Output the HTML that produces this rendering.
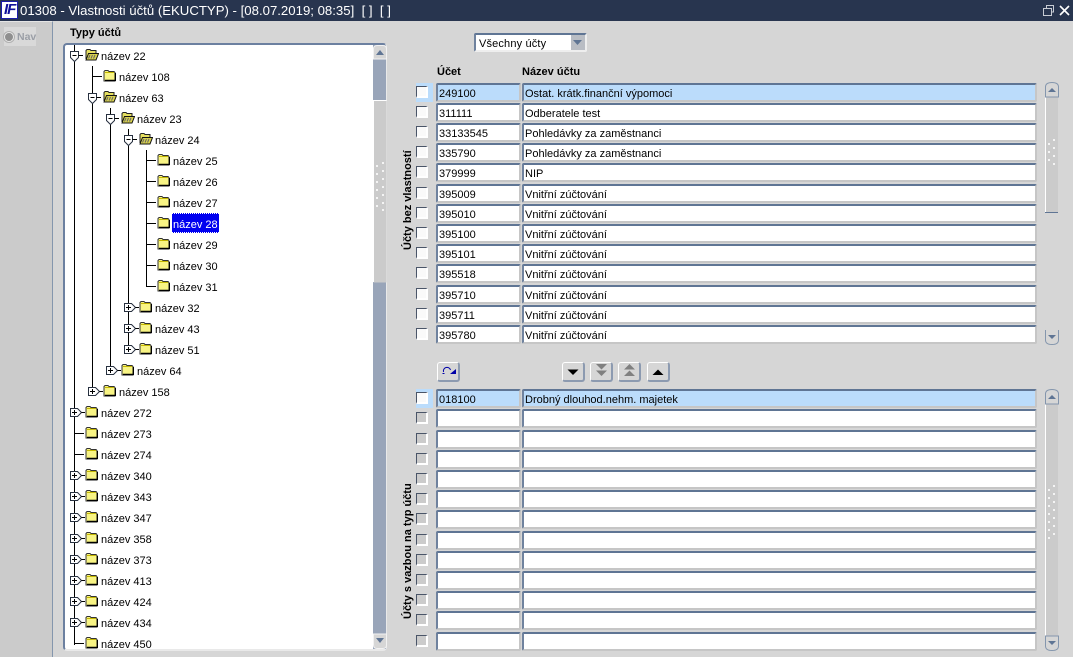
<!DOCTYPE html>
<html lang="cs">
<head>
<meta charset="utf-8">
<title>Vlastnosti účtů</title>
<style>
html,body{margin:0;padding:0;width:1073px;height:657px;overflow:hidden;background:#d6d6d6;font-family:"Liberation Sans",Arial,sans-serif;font-size:11px;color:#000}
div,span{position:absolute;box-sizing:border-box}
.i{height:19px;background:#fff;border-top:2px solid #5f7594;border-left:2px solid #6f829e;border-right:2px solid #c6c6c6;border-bottom:2px solid #c6c6c6;border-radius:2px;line-height:19px;white-space:nowrap;overflow:hidden}
.a{left:436px;width:85px;padding-left:1px}
.n{left:522px;width:515px;padding-left:1px}
.s{background:#bbdcfb}
.c{left:416px;width:12px;height:12px;background:#fafafa;border-top:1px solid #4a5568;border-left:1px solid #4a5568;border-right:2px solid #fff;border-bottom:2px solid #fff}
.d{background:#cbcbcb}
.h{left:416px;width:17px;height:19px;background:#bbdcfb}
.b{width:23px;height:20px;top:362px;background:#d6d6d6;border-top:1px solid #fff;border-left:1px solid #fff;border-right:2px solid #8c9ab0;border-bottom:2px solid #8c9ab0;border-radius:3px}
.l{font-weight:bold;white-space:nowrap}
svg{position:absolute;overflow:hidden}
</style>
</head>
<body>
<svg width="0" height="0" style="left:0;top:0">
<defs>
<symbol id="fc" viewBox="0 0 13 12" width="13" height="12">
<path d="M1 3V1.5L2 .5H5L6 1.5H11L12 2.5V11H1Z" fill="#f8f484" stroke="#333" stroke-width="1"/>
<path d="M2 10.5H12.5M12.5 3V11" stroke="#000" stroke-width="1.4" fill="none"/>
<path d="M2 2.5H11" stroke="#c4b700" stroke-width="1"/>
</symbol>
<symbol id="fo" viewBox="0 0 14 12" width="14" height="12">
<path d="M1 10V1.5L2 .5H5L6 1.5H11V4" fill="#e5df60" stroke="#222" stroke-width="1"/>
<path d="M1 11L3.5 4.5H13.5L11 11Z" fill="#d9d24e" stroke="#111" stroke-width="1"/>
<path d="M3.5 9.5L5 6M6 9.5L7.5 6M8.5 9.5L10 6" stroke="#666" stroke-width="1"/>
</symbol>
<symbol id="ho" viewBox="0 0 14 12" width="14" height="12">
<path d="M.5 .5H8.5V6.5L4.5 10.5L.5 6.5Z" fill="#fff" stroke="#27303f" stroke-width="1"/>
<path d="M2.5 4.5H6.5M8.5 4.5H13" stroke="#000" stroke-width="1"/>
</symbol>
<symbol id="hc" viewBox="0 0 16 10" width="16" height="10">
<path d="M.5 .5H7.5L11.5 4.5L7.5 8.5H.5Z" fill="#fff" stroke="#27303f" stroke-width="1"/>
<path d="M2 4.5H7M4.5 2V7M11.5 4.5H15" stroke="#000" stroke-width="1"/>
</symbol>
</defs>
</svg>

<!-- title bar -->
<div style="left:0;top:0;width:1073px;height:21px;background:#28354f"></div>
<div style="left:1px;top:1px;width:17px;height:18px;background:#fff;border:1px solid #1c1ca8"></div>
<span style="left:4px;top:1px;font:italic bold 15px/18px 'Liberation Sans',sans-serif;color:#10109a;letter-spacing:-1px">IF</span>
<span style="left:20px;top:2px;color:#fff;font-size:13.2px;line-height:17px;white-space:pre">01308 - Vlastnosti účtů (EKUCTYP) - [08.07.2019; 08:35]  [ ]  [ ]</span>
<svg style="left:1040px;top:3px" width="33" height="15" viewBox="0 0 33 15">
<path d="M3.5 5.5H11.5V12.5H3.5ZM6.5 5V2.5H13.5V9H12" fill="none" stroke="#c8ccd4" stroke-width="1"/>
<path d="M20 3L29 12M29 3L20 12" stroke="#fff" stroke-width="1.6"/>
</svg>

<!-- nav -->
<div style="left:0;top:21px;width:53px;height:636px;background:#cbcbcb;border-right:1px solid #8496ad;border-top:1px solid #e4e4e4"></div>
<div style="left:4px;top:27px;width:32px;height:19px;background:#d9d9d9"></div>
<div style="left:4px;top:32px;width:10px;height:10px;border-radius:50%;background:#8f8f8f;border:1px solid #e8e8e8;box-shadow:0 0 0 1px #b0b0b0"></div>
<span style="left:17px;top:30px;color:#9a9ea6;font-weight:bold;font-size:10.5px;line-height:14px">Nav</span>

<span class="l" style="left:70px;top:26px;line-height:14px">Typy účtů</span>

<!-- tree -->
<div style="left:63px;top:43px;width:324px;height:608px;background:#fff;border-top:2px solid #6c80a0;border-left:2px solid #6c80a0;border-right:2px solid #e9e9e9;border-bottom:2px solid #e9e9e9;border-radius:4px"></div>
<svg style="left:65px;top:45px" width="308" height="604" viewBox="65 45 308 604" font-family="'Liberation Sans',Arial,sans-serif" font-size="11">
<g stroke="#000" stroke-width="1" fill="none">
<path d="M74.5 45V645M92.5 66V392M110.5 108V371M128.5 129V350M146.5 150V287"/>
<path d="M93 76.500H102M147 160.500H156M147 181.500H156M147 202.500H156M147 223.500H156M147 244.500H156M147 265.500H156M147 286.500H156M75 433.500H84M75 454.500H84M75 643.500H84"/>
</g>
<use href="#ho" x="70" y="51"/><use href="#ho" x="88" y="93"/><use href="#ho" x="106" y="114"/><use href="#ho" x="124" y="135"/>
<use href="#hc" x="124" y="303"/><use href="#hc" x="124" y="324"/><use href="#hc" x="124" y="345"/><use href="#hc" x="106" y="366"/><use href="#hc" x="88" y="387"/>
<use href="#hc" x="70" y="408"/><use href="#hc" x="70" y="471"/><use href="#hc" x="70" y="492"/><use href="#hc" x="70" y="513"/><use href="#hc" x="70" y="534"/><use href="#hc" x="70" y="555"/><use href="#hc" x="70" y="576"/><use href="#hc" x="70" y="597"/><use href="#hc" x="70" y="618"/>
<use href="#fo" x="85" y="49"/><use href="#fc" x="103" y="70"/><use href="#fo" x="103" y="91"/><use href="#fo" x="121" y="112"/><use href="#fo" x="139" y="133"/>
<use href="#fc" x="157" y="154"/><use href="#fc" x="157" y="175"/><use href="#fc" x="157" y="196"/><use href="#fc" x="157" y="217"/><use href="#fc" x="157" y="238"/><use href="#fc" x="157" y="259"/><use href="#fc" x="157" y="280"/>
<use href="#fc" x="139" y="301"/><use href="#fc" x="139" y="322"/><use href="#fc" x="139" y="343"/><use href="#fc" x="121" y="364"/><use href="#fc" x="103" y="385"/>
<use href="#fc" x="85" y="406"/><use href="#fc" x="85" y="427"/><use href="#fc" x="85" y="448"/><use href="#fc" x="85" y="469"/><use href="#fc" x="85" y="490"/><use href="#fc" x="85" y="511"/><use href="#fc" x="85" y="532"/><use href="#fc" x="85" y="553"/><use href="#fc" x="85" y="574"/><use href="#fc" x="85" y="595"/><use href="#fc" x="85" y="616"/><use href="#fc" x="85" y="637"/>
<rect x="172" y="213" width="47" height="20" fill="#0000f0"/>
<path d="M172 213.500H219M172 232.500H219" stroke="#fff" stroke-width="1" stroke-dasharray="1 1"/>
<text x="101" y="60">název 22</text>
<text x="119" y="81">název 108</text>
<text x="119" y="102">název 63</text>
<text x="137" y="123">název 23</text>
<text x="155" y="144">název 24</text>
<text x="173" y="165">název 25</text>
<text x="173" y="186">název 26</text>
<text x="173" y="207">název 27</text>
<text x="173" y="228" fill="#fff">název 28</text>
<text x="173" y="249">název 29</text>
<text x="173" y="270">název 30</text>
<text x="173" y="291">název 31</text>
<text x="155" y="312">název 32</text>
<text x="155" y="333">název 43</text>
<text x="155" y="354">název 51</text>
<text x="137" y="375">název 64</text>
<text x="119" y="396">název 158</text>
<text x="101" y="417">název 272</text>
<text x="101" y="438">název 273</text>
<text x="101" y="459">název 274</text>
<text x="101" y="480">název 340</text>
<text x="101" y="501">název 343</text>
<text x="101" y="522">název 347</text>
<text x="101" y="543">název 358</text>
<text x="101" y="564">název 373</text>
<text x="101" y="585">název 413</text>
<text x="101" y="606">název 424</text>
<text x="101" y="627">název 434</text>
<text x="101" y="648">název 450</text>
</svg>

<!-- tree scrollbar -->
<svg style="left:372px;top:43px" width="16" height="608" viewBox="372 43 16 608">
<rect x="373" y="45" width="13" height="604" fill="#99a5b9"/>
<rect x="373.500" y="100.500" width="13" height="182" fill="#cbcbcb"/>
<path d="M373.500 282V100.500H386.500" stroke="#fff" fill="none"/>
<path d="M373.500 59V49Q373.500 45.500 377 45.500H383Q386.500 45.500 386.500 49V59Z" fill="#d6d6d6" stroke="#f2f2f2"/>
<path d="M376 55L380 50L384 55Z" fill="#5f7594"/>
<path d="M373.500 634V645Q373.500 648.500 377 648.500H383Q386.500 648.500 386.500 645V634Z" fill="#d6d6d6" stroke="#f2f2f2"/>
<path d="M376 638L380 643L384 638Z" fill="#5f7594"/>
<path d="M382 162h2v2h-2zM376 165h2v2h-2zM382 170h2v2h-2zM376 173h2v2h-2zM382 178h2v2h-2zM376 181h2v2h-2zM382 186h2v2h-2zM376 189h2v2h-2zM382 194h2v2h-2zM376 197h2v2h-2zM382 202h2v2h-2zM376 205h2v2h-2zM382 209h2v2h-2z" fill="#f4f4f4"/>
</svg>

<!-- combobox -->
<div style="left:474px;top:33px;width:113px;height:19px;background:#fff;border-top:2px solid #5f7594;border-left:2px solid #6f829e;border-right:2px solid #eee;border-bottom:2px solid #eee;border-radius:2px"></div>
<span style="left:479px;top:37px;line-height:15px;white-space:nowrap;letter-spacing:.15px">Všechny účty</span>
<div style="left:571px;top:35px;width:14px;height:15px;background:#b9bdc4"></div>
<svg style="left:573px;top:40px" width="10" height="6"><path d="M0 0H9L4.500 5Z" fill="#5f7594"/></svg>

<span class="l" style="left:437px;top:65px;line-height:14px">Účet</span>
<span class="l" style="left:522px;top:65px;line-height:14px">Název účtu</span>

<!-- vertical labels -->
<svg style="left:398px;top:140px" width="20" height="112" font-family="'Liberation Sans',Arial,sans-serif" font-size="11" font-weight="bold"><text transform="translate(13,110) rotate(-90)">Účty bez vlastností</text></svg>
<svg style="left:398px;top:470px" width="20" height="152" font-family="'Liberation Sans',Arial,sans-serif" font-size="11" font-weight="bold"><text transform="translate(13,149) rotate(-90)">Účty s vazbou na typ účtu</text></svg>

<!-- top rows -->
<div class="h" style="top:83px"></div>
<div class="c" style="top:86px"></div><div class="i a s" style="top:83px">249100</div><div class="i n s" style="top:83px">Ostat. krátk.finanční výpomoci</div>
<div class="c" style="top:106px"></div><div class="i a" style="top:103px">311111</div><div class="i n" style="top:103px">Odberatele test</div>
<div class="c" style="top:126px"></div><div class="i a" style="top:123px">33133545</div><div class="i n" style="top:123px">Pohledávky za zaměstnanci</div>
<div class="c" style="top:146px"></div><div class="i a" style="top:143px">335790</div><div class="i n" style="top:143px">Pohledávky za zaměstnanci</div>
<div class="c" style="top:166px"></div><div class="i a" style="top:163px">379999</div><div class="i n" style="top:163px">NIP</div>
<div class="c" style="top:187px"></div><div class="i a" style="top:184px">395009</div><div class="i n" style="top:184px">Vnitřní zúčtování</div>
<div class="c" style="top:207px"></div><div class="i a" style="top:204px">395010</div><div class="i n" style="top:204px">Vnitřní zúčtování</div>
<div class="c" style="top:227px"></div><div class="i a" style="top:224px">395100</div><div class="i n" style="top:224px">Vnitřní zúčtování</div>
<div class="c" style="top:247px"></div><div class="i a" style="top:244px">395101</div><div class="i n" style="top:244px">Vnitřní zúčtování</div>
<div class="c" style="top:267px"></div><div class="i a" style="top:264px">395518</div><div class="i n" style="top:264px">Vnitřní zúčtování</div>
<div class="c" style="top:288px"></div><div class="i a" style="top:285px">395710</div><div class="i n" style="top:285px">Vnitřní zúčtování</div>
<div class="c" style="top:308px"></div><div class="i a" style="top:305px">395711</div><div class="i n" style="top:305px">Vnitřní zúčtování</div>
<div class="c" style="top:328px"></div><div class="i a" style="top:325px">395780</div><div class="i n" style="top:325px">Vnitřní zúčtování</div>

<!-- top scrollbar -->
<svg style="left:1044px;top:81px" width="16" height="266" viewBox="1044 81 16 266">
<rect x="1045" y="97" width="13" height="115" fill="#cbcbcb"/>
<path d="M1045.500 212V97" stroke="#fff"/>
<path d="M1045 212.500H1058" stroke="#5f7594"/>
<path d="M1045.500 97V87Q1045.500 82.500 1052 82.500Q1058.500 82.500 1058.500 87V97Z" fill="#d6d6d6" stroke="#8496ad"/>
<path d="M1048 92L1052 88L1056 92Z" fill="#5f7594"/>
<path d="M1045.500 330V340Q1045.500 344.500 1052 344.500Q1058.500 344.500 1058.500 340V330" fill="#d6d6d6" stroke="#8496ad"/>
<path d="M1048 335L1052 339L1056 335Z" fill="#5f7594"/>
<path d="M1053 139h2v2h-2zM1048 143h2v2h-2zM1053 147h2v2h-2zM1048 151h2v2h-2zM1053 155h2v2h-2zM1048 159h2v2h-2zM1053 163h2v2h-2z" fill="#f4f4f4"/>
</svg>

<!-- buttons -->
<div class="b" style="left:437px"></div>
<svg style="left:441px;top:365px" width="17" height="13"><path d="M2.500 7A3.500 3.500 0 0 1 9.500 5" fill="none" stroke="#0000a8" stroke-width="1"/><path d="M1.500 8.500H3.500" stroke="#0000a8"/><path d="M9 9H15V4Z" fill="#0000a8"/></svg>
<div class="b" style="left:562px"></div>
<svg style="left:566px;top:369px" width="16" height="7"><path d="M1.500 0.500H12.500L7 6Z" fill="#000"/></svg>
<div class="b" style="left:590px"></div>
<svg style="left:594px;top:364px" width="16" height="13"><path d="M2 0H13L7.500 5.500Z M2 6.500H13L7.500 12Z" fill="#808080"/></svg>
<div class="b" style="left:618px"></div>
<svg style="left:622px;top:364px" width="16" height="13"><path d="M7.500 0L13 5.500H2Z M7.500 6.500L13 12H2Z" fill="#808080"/></svg>
<div class="b" style="left:647px"></div>
<svg style="left:651px;top:369px" width="16" height="7"><path d="M7 0.500L12.500 6H1.500Z" fill="#000"/></svg>

<!-- bottom rows -->
<div class="h" style="top:389px"></div>
<div class="c" style="top:392px"></div><div class="i a s" style="top:389px">018100</div><div class="i n s" style="top:389px">Drobný dlouhod.nehm. majetek</div>
<div class="c d" style="top:412px"></div><div class="i a" style="top:409px"></div><div class="i n" style="top:409px"></div>
<div class="c d" style="top:433px"></div><div class="i a" style="top:430px"></div><div class="i n" style="top:430px"></div>
<div class="c d" style="top:453px"></div><div class="i a" style="top:450px"></div><div class="i n" style="top:450px"></div>
<div class="c d" style="top:473px"></div><div class="i a" style="top:470px"></div><div class="i n" style="top:470px"></div>
<div class="c d" style="top:493px"></div><div class="i a" style="top:490px"></div><div class="i n" style="top:490px"></div>
<div class="c d" style="top:513px"></div><div class="i a" style="top:510px"></div><div class="i n" style="top:510px"></div>
<div class="c d" style="top:534px"></div><div class="i a" style="top:531px"></div><div class="i n" style="top:531px"></div>
<div class="c d" style="top:554px"></div><div class="i a" style="top:551px"></div><div class="i n" style="top:551px"></div>
<div class="c d" style="top:574px"></div><div class="i a" style="top:571px"></div><div class="i n" style="top:571px"></div>
<div class="c d" style="top:594px"></div><div class="i a" style="top:591px"></div><div class="i n" style="top:591px"></div>
<div class="c d" style="top:614px"></div><div class="i a" style="top:611px"></div><div class="i n" style="top:611px"></div>
<div class="c d" style="top:635px"></div><div class="i a" style="top:632px"></div><div class="i n" style="top:632px"></div>

<!-- bottom scrollbar -->
<svg style="left:1044px;top:388px" width="16" height="265" viewBox="1044 388 16 265">
<rect x="1045" y="404" width="13" height="232" fill="#cbcbcb"/>
<path d="M1045.500 636V404" stroke="#fff"/>
<path d="M1045.500 404V394Q1045.500 389.500 1052 389.500Q1058.500 389.500 1058.500 394V404Z" fill="#d6d6d6" stroke="#8496ad"/>
<path d="M1048 399L1052 395L1056 399Z" fill="#5f7594"/>
<path d="M1045.500 636V646Q1045.500 650.500 1052 650.500Q1058.500 650.500 1058.500 646V636Z" fill="#d6d6d6" stroke="#8496ad"/>
<path d="M1048 641L1052 645L1056 641Z" fill="#5f7594"/>
<path d="M1053 485h2v2h-2zM1048 489h2v2h-2zM1053 493h2v2h-2zM1048 497h2v2h-2zM1053 501h2v2h-2zM1048 505h2v2h-2zM1053 509h2v2h-2zM1048 513h2v2h-2zM1053 517h2v2h-2zM1048 521h2v2h-2zM1053 525h2v2h-2zM1048 529h2v2h-2zM1053 533h2v2h-2zM1048 537h2v2h-2z" fill="#f4f4f4"/>
</svg>
</body>
</html>
